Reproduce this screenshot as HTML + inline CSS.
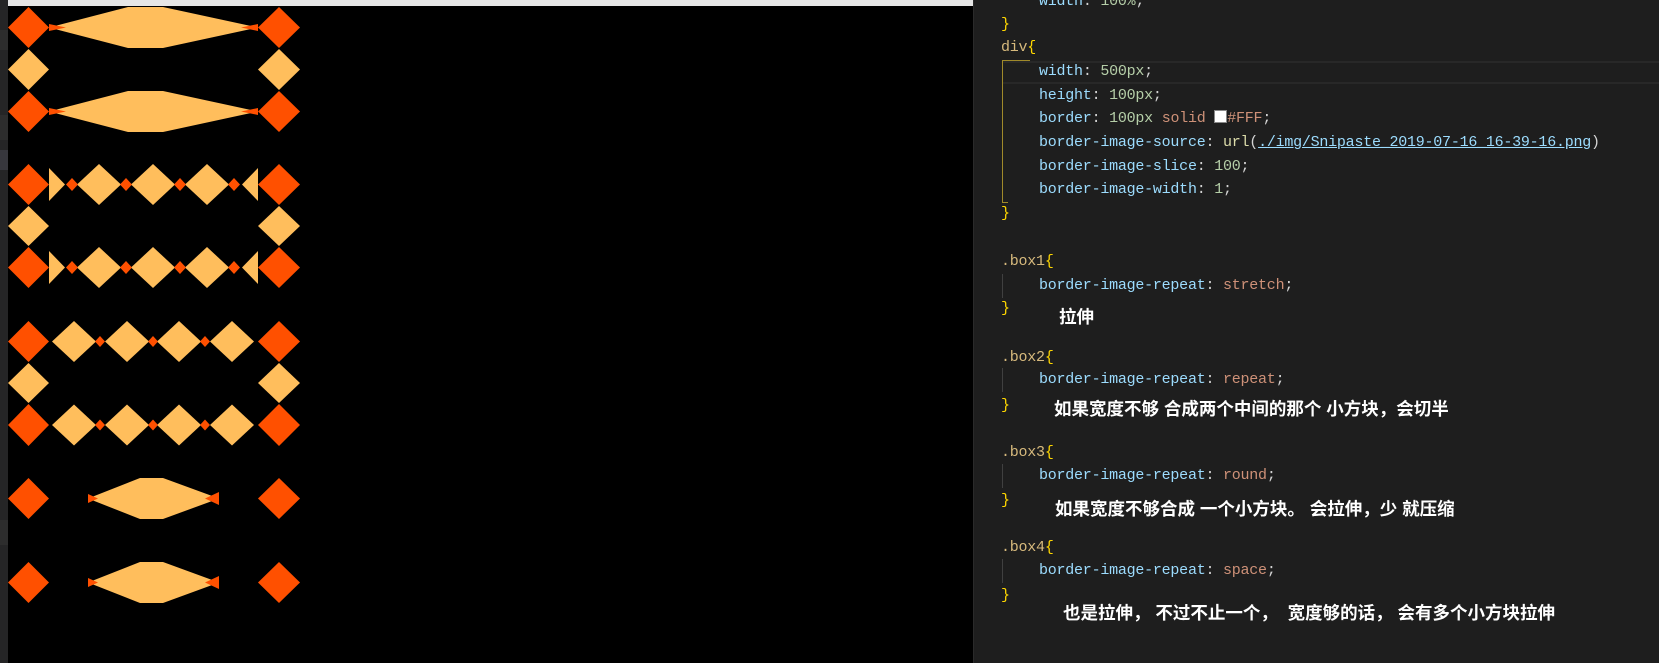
<!DOCTYPE html>
<html><head><meta charset="utf-8"><style>
html,body{margin:0;padding:0;width:1659px;height:663px;overflow:hidden;background:#000;}
#left{position:absolute;left:0;top:0;width:8px;height:663px;background:#252526;}
#top{position:absolute;left:8px;top:0;width:965px;height:6px;background:#e6e6e6;}
#code{position:absolute;left:973px;top:0;width:686px;height:663px;background:#1e1e1e;border-left:1px solid #2a2a2a;}
.l{position:absolute;white-space:pre;font-family:"Liberation Mono",monospace;font-size:15px;letter-spacing:-0.24px;line-height:24px;height:24px;color:#d4d4d4;}
.p{color:#9cdcfe}.n{color:#b5cea8}.s{color:#ce9178}.sel{color:#d7ba7d}.b{color:#ffd700}.u{color:#9cdcfe;text-decoration:underline}
.c{position:absolute;white-space:pre;font-family:"Liberation Sans","Noto Sans CJK SC",sans-serif;font-weight:bold;font-size:17.5px;letter-spacing:0px;color:#fff;line-height:22px;}
.g{position:absolute;width:1px;background:#404040;}
</style></head><body>
<div id="left">
<div style="position:absolute;top:30px;left:0;width:8px;height:20px;background:#2d2d2d"></div>
<div style="position:absolute;top:115px;left:0;width:8px;height:25px;background:#2d2d2d"></div>
<div style="position:absolute;top:150px;left:0;width:8px;height:20px;background:#37373d"></div>
<div style="position:absolute;top:520px;left:0;width:8px;height:25px;background:#2d2d2d"></div>
</div>
<div id="top"></div>
<svg style="position:absolute;left:0;top:0" width="973" height="663">
<g fill="#ff5000">
<polygon points="8,27.5 28.5,7 49,27.5 28.5,48"/><polygon points="258,27.5 279,7 300,27.5 279,48"/>
<polygon points="8,111.5 28.5,91 49,111.5 28.5,132"/><polygon points="258,111.5 279,91 300,111.5 279,132"/>
<polygon points="8,184.5 28.5,164 49,184.5 28.5,205"/><polygon points="258,184.5 279,164 300,184.5 279,205"/>
<polygon points="8,267.5 28.5,247 49,267.5 28.5,288"/><polygon points="258,267.5 279,247 300,267.5 279,288"/>
<polygon points="8,341.5 28.5,321 49,341.5 28.5,362"/><polygon points="258,341.5 279,321 300,341.5 279,362"/>
<polygon points="8,425 28.5,404 49,425 28.5,446"/><polygon points="258,425 279,404 300,425 279,446"/>
<polygon points="8,498.5 28.5,478 49,498.5 28.5,519"/><polygon points="258,498.5 279,478 300,498.5 279,519"/>
<polygon points="8,582.5 28.5,562 49,582.5 28.5,603"/><polygon points="258,582.5 279,562 300,582.5 279,603"/>
</g>
<g fill="#ffbe5c">
<polygon points="49,27.5 128,7 163,7 258,27.5 163,48 128,48"/>
<polygon points="49,111.5 128,91 163,91 258,111.5 163,132 128,132"/>
<polygon points="8,69.5 28.5,49 49,69.5 28.5,90"/><polygon points="258,69.5 279,49 300,69.5 279,90"/>
<polygon points="8,226 28.5,206 49,226 28.5,246"/><polygon points="258,226 279,206 300,226 279,246"/>
<polygon points="8,383 28.5,363 49,383 28.5,403"/><polygon points="258,383 279,363 300,383 279,403"/>
<polygon points="88,498.5 140,478 163,478 219,498.5 163,519 140,519"/>
<polygon points="88,582.5 140,562 163,562 219,582.5 163,603 140,603"/>
</g>
<g fill="#ff5000">
<polygon points="49,24 66,27.5 49,31"/><polygon points="258,24 241,27.5 258,31"/>
<polygon points="49,108 66,111.5 49,115"/><polygon points="258,108 241,111.5 258,115"/>
<polygon points="88,494 98,498.5 88,503"/><polygon points="219,492 205,498.5 219,505"/>
<polygon points="88,578 98,582.5 88,587"/><polygon points="219,576 205,582.5 219,589"/>
</g>
<g id="r2">
<g fill="#ffbe5c">
<polygon points="49,168 65,184.5 49,201"/><polygon points="258,168 242,184.5 258,201"/>
<polygon points="77,184.5 99,164 121,184.5 99,205"/><polygon points="131,184.5 153,164 175,184.5 153,205"/><polygon points="185,184.5 207,164 229,184.5 207,205"/>
</g>
<g fill="#ff5000">
<polygon points="66,184.5 72,178 78,184.5 72,191"/><polygon points="120,184.5 126,178 132,184.5 126,191"/><polygon points="174,184.5 180,178 186,184.5 180,191"/><polygon points="228,184.5 234,178 240,184.5 234,191"/>
</g></g>
<use href="#r2" transform="translate(0,83)"/>
<g id="r3">
<g fill="#ffbe5c">
<polygon points="52,341.5 74,321 96,341.5 74,362"/><polygon points="105,341.5 127,321 149,341.5 127,362"/><polygon points="157,341.5 179,321 201,341.5 179,362"/><polygon points="210,341.5 232,321 254,341.5 232,362"/>
</g>
<g fill="#ff5000">
<polygon points="95,341.5 100,336 105,341.5 100,347"/><polygon points="148,341.5 153,336 158,341.5 153,347"/><polygon points="200,341.5 205,336 210,341.5 205,347"/>
</g></g>
<use href="#r3" transform="translate(0,83.5)"/>
</svg>
<div id="code">
<div style="position:absolute;left:28px;top:61px;width:658px;height:19px;border-top:2px solid #282828;border-bottom:2px solid #282828"></div>
<div style="position:absolute;left:28px;top:60px;width:1px;height:143px;background:#a08a2a"></div>
<div style="position:absolute;left:28px;top:60px;width:28px;height:1px;background:#a08a2a"></div>
<div style="position:absolute;left:28px;top:202px;width:6px;height:1px;background:#a08a2a"></div>
<div class="g" style="left:28px;top:274px;height:24px"></div>
<div class="g" style="left:28px;top:368px;height:24px"></div>
<div class="g" style="left:28px;top:464px;height:24px"></div>
<div class="g" style="left:28px;top:559px;height:24px"></div>
</div>
<div class="l" style="left:1039px;top:-10px"><span class="p">width</span>: <span class="n">100%</span>;</div>
<div class="l b" style="left:1001px;top:13px">}</div>
<div class="l" style="left:1001px;top:36px"><span class="sel">div</span><span class="b">{</span></div>
<div class="l" style="left:1039px;top:60px"><span class="p">width</span>: <span class="n">500px</span>;</div>
<div class="l" style="left:1039px;top:84px"><span class="p">height</span>: <span class="n">100px</span>;</div>
<div class="l" style="left:1039px;top:107px"><span class="p">border</span>: <span class="n">100px</span> <span class="s">solid</span> <span style="display:inline-block;width:11px;height:11px;background:#fff;vertical-align:-1px;border:1px solid #888"></span><span class="s">#FFF</span>;</div>
<div class="l" style="left:1039px;top:131px"><span class="p">border-image-source</span>: <span style="color:#dcdcaa">url</span>(<span class="u">./img/Snipaste_2019-07-16_16-39-16.png</span>)</div>
<div class="l" style="left:1039px;top:155px"><span class="p">border-image-slice</span>: <span class="n">100</span>;</div>
<div class="l" style="left:1039px;top:178px"><span class="p">border-image-width</span>: <span class="n">1</span>;</div>
<div class="l b" style="left:1001px;top:202px">}</div>
<div class="l" style="left:1001px;top:250px"><span class="sel">.box1</span><span class="b">{</span></div>
<div class="l" style="left:1039px;top:274px"><span class="p">border-image-repeat</span>: <span class="s">stretch</span>;</div>
<div class="l b" style="left:1001px;top:297px">}</div>
<div class="c" style="left:1059px;top:306px">拉伸</div>
<div class="l" style="left:1001px;top:346px"><span class="sel">.box2</span><span class="b">{</span></div>
<div class="l" style="left:1039px;top:368px"><span class="p">border-image-repeat</span>: <span class="s">repeat</span>;</div>
<div class="l b" style="left:1001px;top:394px">}</div>
<div class="c" style="left:1054px;top:398px">如果宽度不够 合成两个中间的那个 小方块，会切半</div>
<div class="l" style="left:1001px;top:441px"><span class="sel">.box3</span><span class="b">{</span></div>
<div class="l" style="left:1039px;top:464px"><span class="p">border-image-repeat</span>: <span class="s">round</span>;</div>
<div class="l b" style="left:1001px;top:489px">}</div>
<div class="c" style="left:1055px;top:498px">如果宽度不够合成 一个小方块。 会拉伸，少 就压缩</div>
<div class="l" style="left:1001px;top:536px"><span class="sel">.box4</span><span class="b">{</span></div>
<div class="l" style="left:1039px;top:559px"><span class="p">border-image-repeat</span>: <span class="s">space</span>;</div>
<div class="l b" style="left:1001px;top:584px">}</div>
<div class="c" style="left:1063px;top:602px">也是拉伸， 不过不止一个，  宽度够的话， 会有多个小方块拉伸</div>
</body></html>
